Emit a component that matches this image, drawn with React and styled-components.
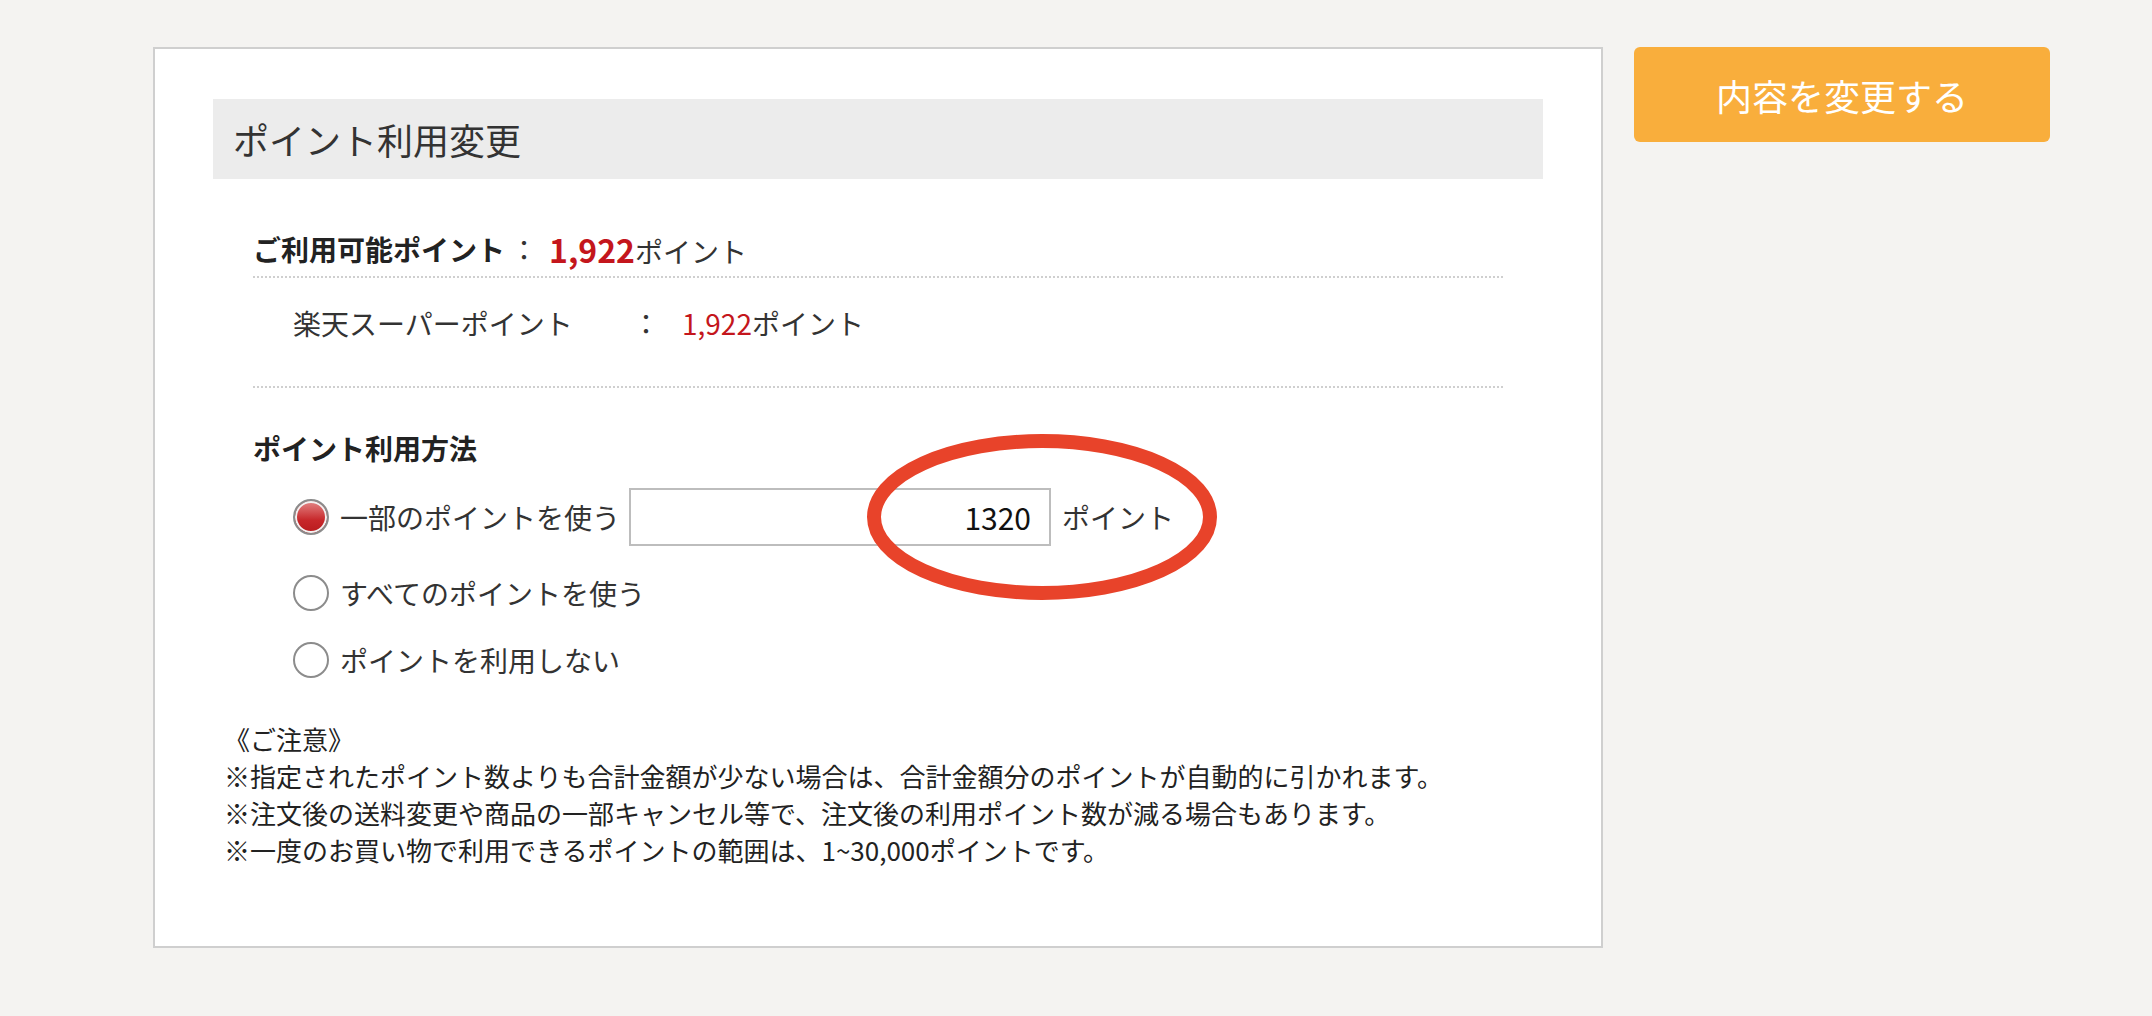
import React from "react";
import styled, { createGlobalStyle } from "styled-components";

const GlobalStyle = createGlobalStyle`
  html, body {
    margin: 0;
    padding: 0;
    background: #f4f3f1;
  }
  body {
    font-family: "Noto Sans CJK JP", "Noto Sans", sans-serif;
    color: #333333;
  }
`;

const Page = styled.div`
  display: flex;
  align-items: flex-start;
  gap: 31px;
  padding: 47px 0 60px 153px;
`;

const Panel = styled.section`
  box-sizing: border-box;
  width: 1450px;
  background: #ffffff;
  border: 2px solid #cfcfcf;
  padding: 50px 58px 78px;
`;

const PanelHeader = styled.h2`
  margin: 0;
  height: 80px;
  display: flex;
  align-items: center;
  padding-left: 20px;
  background: #ececec;
  font-size: 36px;
  font-weight: 400;
  color: #333;
`;

const Section = styled.div`
  margin: 50px 40px 0;
`;

const PointRow = styled.div`
  display: flex;
  align-items: center;
  height: 40px;
  font-size: 28px;
  padding: ${(p) => p.$padding || "0"};
  border-bottom: 2px dotted #cfcfcf;
`;

const RowLabel = styled.span`
  font-weight: ${(p) => (p.$bold ? 700 : 400)};
  color: ${(p) => (p.$bold ? "#222" : "#333")};
  width: ${(p) => p.$width || "auto"};
  flex-shrink: 0;
`;

const Colon = styled.span`
  width: 28px;
  margin-left: ${(p) => p.$offset || "0"};
  text-align: center;
  flex-shrink: 0;
`;

const Amount = styled.span`
  margin-left: ${(p) => p.$gap};
  color: #333;
`;

const Number = styled.span`
  color: #c4161c;
  font-size: ${(p) => (p.$big ? "32px" : "28px")};
  font-weight: ${(p) => (p.$big ? 700 : 400)};
`;

const MethodTitle = styled.h3`
  margin: 40px 0 0;
  height: 40px;
  line-height: 40px;
  font-size: 28px;
  font-weight: 700;
  color: #222;
`;

const OptionList = styled.div`
  display: flex;
  flex-direction: column;
  padding-left: 40px;
  margin-top: 20px;
  gap: 27px;
`;

const Option = styled.label`
  position: relative;
  display: flex;
  align-items: center;
  min-height: 40px;
  font-size: 28px;
  color: #333;
`;

const Radio = styled.span`
  box-sizing: border-box;
  width: 36px;
  height: 36px;
  border-radius: 50%;
  border: 2px solid #8c8c8c;
  flex-shrink: 0;
  margin-right: 11px;
  background: ${(p) =>
    p.$checked ? "linear-gradient(180deg, #e38787 0%, #c7272a 60%, #b81a1d 100%)" : "#ffffff"};
  box-shadow: ${(p) => (p.$checked ? "inset 0 0 0 2px #f2f2f2" : "none")};
`;

const PointInput = styled.input`
  box-sizing: border-box;
  width: 422px;
  height: 58px;
  margin-left: 9px;
  border: 2px solid #bdbdbd;
  padding: 0 18px;
  text-align: right;
  font-family: "Noto Sans CJK JP", "Noto Sans", sans-serif;
  font-size: 30px;
  color: #111;
  background: #fff;
  outline: none;
`;

const Unit = styled.span`
  margin-left: 11px;
`;

const Highlight = styled.svg`
  position: absolute;
  left: 573px;
  top: -55px;
  pointer-events: none;
`;

const Notes = styled.div`
  margin: 40px 0 0 11px;
  font-size: 26px;
  line-height: 37px;
  color: #222;
`;

const NoteLine = styled.p`
  margin: 0;
`;

const ChangeButton = styled.button`
  width: 416px;
  height: 95px;
  border: none;
  border-radius: 6px;
  background: #f9ae3c;
  color: #ffffff;
  font-family: "Noto Sans CJK JP", "Noto Sans", sans-serif;
  font-size: 36px;
  font-weight: 400;
  cursor: pointer;
`;

const App = () => {
  return (
    <>
      <GlobalStyle />
      <Page>
        <Panel>
          <PanelHeader>ポイント利用変更</PanelHeader>
          <Section>
            <PointRow $padding="0 0 7px">
              <RowLabel $bold>ご利用可能ポイント</RowLabel>
              <Colon $offset="5px">：</Colon>
              <Amount $gap="11px">
                <Number $big>1,922</Number>ポイント
              </Amount>
            </PointRow>
            <PointRow $padding="25px 0 43px 40px">
              <RowLabel $width="339px">楽天スーパーポイント</RowLabel>
              <Colon>：</Colon>
              <Amount $gap="22px">
                <Number>1,922</Number>ポイント
              </Amount>
            </PointRow>

            <MethodTitle>ポイント利用方法</MethodTitle>
            <OptionList>
              <Option>
                <Radio $checked />
                一部のポイントを使う
                <PointInput defaultValue="1320" />
                <Unit>ポイント</Unit>
                <Highlight width="352" height="168" viewBox="0 0 352 168">
                  <ellipse cx="176" cy="84" rx="168" ry="76" fill="none" stroke="#e8432a" strokeWidth="14" />
                </Highlight>
              </Option>
              <Option>
                <Radio />
                すべてのポイントを使う
              </Option>
              <Option>
                <Radio />
                ポイントを利用しない
              </Option>
            </OptionList>
          </Section>
          <Notes>
            <NoteLine>《ご注意》</NoteLine>
            <NoteLine>※指定されたポイント数よりも合計金額が少ない場合は、合計金額分のポイントが自動的に引かれます。</NoteLine>
            <NoteLine>※注文後の送料変更や商品の一部キャンセル等で、注文後の利用ポイント数が減る場合もあります。</NoteLine>
            <NoteLine>※一度のお買い物で利用できるポイントの範囲は、1~30,000ポイントです。</NoteLine>
          </Notes>
        </Panel>
        <ChangeButton>内容を変更する</ChangeButton>
      </Page>
    </>
  );
};

export default App;
